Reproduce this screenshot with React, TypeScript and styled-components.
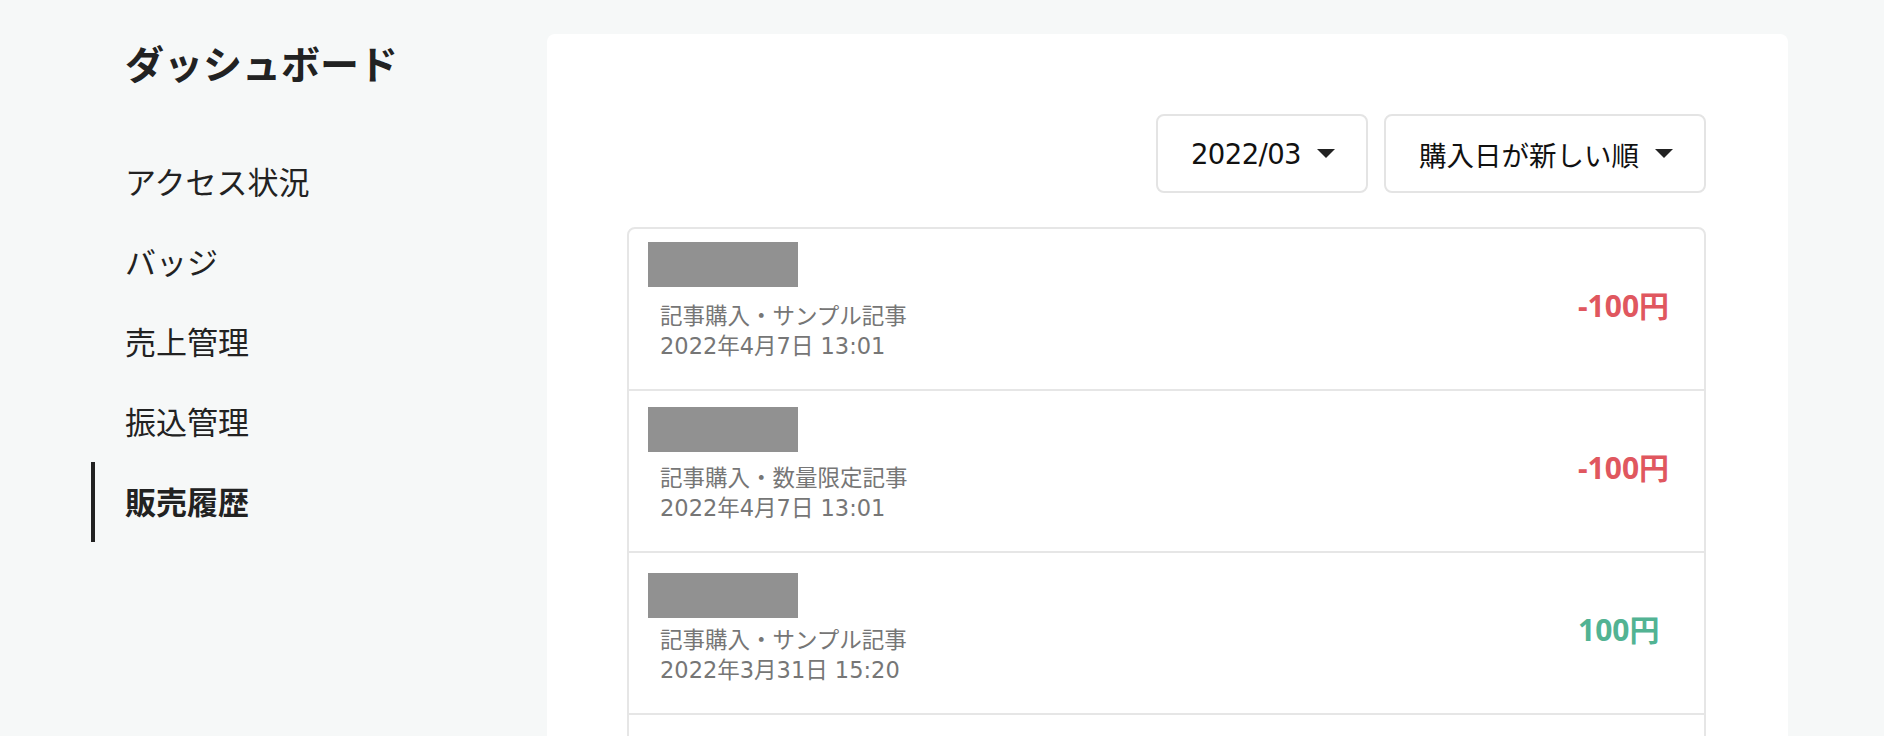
import React from 'react';
import styled, { createGlobalStyle } from 'styled-components';

const GlobalStyle = createGlobalStyle`
  * { box-sizing: border-box; }
  html, body {
    margin: 0;
    padding: 0;
    background: #f6f8f8;
  }
  body {
    font-family: "Noto Sans CJK JP", sans-serif;
    color: #222;
  }
`;

const Page = styled.div`
  display: flex;
  align-items: flex-start;
  padding-top: 34px;
`;

const Sidebar = styled.aside`
  flex-shrink: 0;
  width: 456px;
  margin-left: 91px;
`;

const Title = styled.h1`
  margin: 0;
  padding-left: 34px;
  font-size: 39px;
  font-weight: 700;
  line-height: 56px;
  color: #222;
`;

const Nav = styled.nav`
  display: flex;
  flex-direction: column;
  margin-top: 52px;
`;

const NavItem = styled.a<{ $active?: boolean }>`
  display: flex;
  align-items: center;
  height: 80px;
  padding-left: 30px;
  padding-bottom: 4px;
  border-left: 4px solid ${(p) => (p.$active ? '#222' : 'transparent')};
  font-size: 31px;
  font-weight: ${(p) => (p.$active ? 700 : 400)};
  color: #222;
  text-decoration: none;
`;

const Panel = styled.main`
  flex-shrink: 0;
  width: 1241px;
  min-height: 900px;
  padding: 80px 82px 40px 80px;
  background: #fff;
  border-radius: 8px 8px 0 0;
`;

const Toolbar = styled.div`
  display: flex;
  justify-content: flex-end;
  gap: 16px;
`;

const Select = styled.button`
  display: flex;
  align-items: center;
  gap: 16px;
  height: 79px;
  padding: 0 31px 0 33px;
  background: #fff;
  border: 2px solid #e4e4e4;
  border-radius: 8px;
  font-family: "DejaVu Sans", "Noto Sans CJK JP", sans-serif;
  font-size: 27.5px;
  color: #111;
  cursor: pointer;
`;

const SelectValue = styled.span<{ $tight?: boolean }>`
  letter-spacing: ${(p) => (p.$tight ? '-0.6px' : '0')};
`;

const List = styled.ul`
  margin: 34px 0 0;
  padding: 0;
  list-style: none;
  border: 2px solid #e6e6e6;
  border-radius: 8px;
`;

const Row = styled.li`
  display: flex;
  height: 162px;
  padding-left: 19px;
  border-bottom: 2px solid #e6e6e6;

  &:last-child {
    border-bottom: none;
  }
`;

const Left = styled.div`
  flex: 1;
  display: flex;
  flex-direction: column;
`;

const NameArea = styled.div<{ $offset: number }>`
  height: 72px;
  padding-top: ${(p) => p.$offset}px;
`;

const Mask = styled.div`
  width: 150px;
  height: 45px;
  background: #919191;
`;

const Info = styled.div`
  padding-left: 12px;
  font-family: "DejaVu Sans", "Noto Sans CJK JP", sans-serif;
  font-size: 22.5px;
  line-height: 30px;
  color: #767676;
`;

const Amount = styled.div<{ $negative: boolean }>`
  align-self: center;
  width: 110px;
  margin-right: 16px;
  margin-bottom: 10px;
  font-family: "Noto Sans", "Noto Sans CJK JP", sans-serif;
  font-size: 30px;
  font-weight: 700;
  color: ${(p) => (p.$negative ? '#e0575f' : '#52b393')};
`;

const Caret = () => (
  <svg width="18" height="9" viewBox="0 0 18 9">
    <polygon points="0,0 18,0 9,9" fill="#222" />
  </svg>
);

const navItems = ['アクセス状況', 'バッジ', '売上管理', '振込管理', '販売履歴'];

const sales = [
  { offset: 13, label: '記事購入・サンプル記事', date: '2022年4月7日 13:01', amount: -100 },
  { offset: 16, label: '記事購入・数量限定記事', date: '2022年4月7日 13:01', amount: -100 },
  { offset: 20, label: '記事購入・サンプル記事', date: '2022年3月31日 15:20', amount: 100 },
  { offset: 24, label: '記事購入・サンプル記事', date: '2022年3月30日 10:12', amount: 100 },
];

const App: React.FC = () => {
  return (
    <>
      <GlobalStyle />
      <Page>
        <Sidebar>
          <Title>ダッシュボード</Title>
          <Nav>
            {navItems.map((item) => (
              <NavItem key={item} href="#" $active={item === '販売履歴'}>
                {item}
              </NavItem>
            ))}
          </Nav>
        </Sidebar>
        <Panel>
          <Toolbar>
            <Select>
              <SelectValue $tight>2022/03</SelectValue>
              <Caret />
            </Select>
            <Select>
              <SelectValue>購入日が新しい順</SelectValue>
              <Caret />
            </Select>
          </Toolbar>
          <List>
            {sales.map((s, i) => (
              <Row key={i}>
                <Left>
                  <NameArea $offset={s.offset}>
                    <Mask />
                  </NameArea>
                  <Info>
                    <div>{s.label}</div>
                    <div>{s.date}</div>
                  </Info>
                </Left>
                <Amount $negative={s.amount < 0}>{s.amount}円</Amount>
              </Row>
            ))}
          </List>
        </Panel>
      </Page>
    </>
  );
};

export default App;
